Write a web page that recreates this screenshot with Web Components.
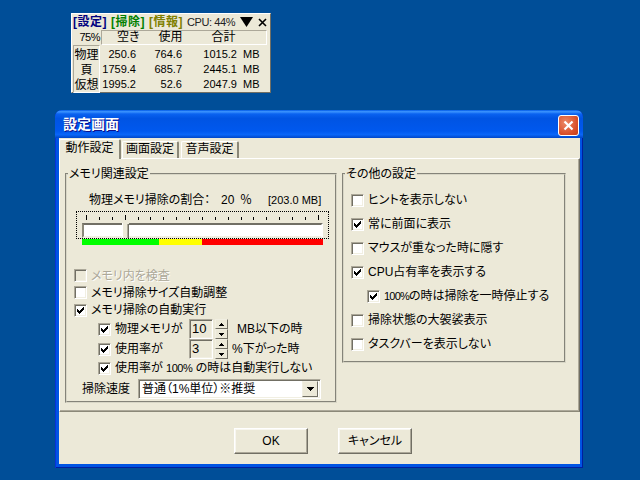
<!DOCTYPE html>
<html lang="ja">
<head>
<meta charset="utf-8">
<title>設定画面</title>
<style>
html, body { margin: 0; padding: 0; background: #004e98; }
</style>
</head>
<body>
<x-desktop>
  <x-monitor></x-monitor>
  <x-dialog>
    <span slot="title">設定画面</span>
    <x-tabs></x-tabs>
    <x-page>
      <x-group style="width:272px;height:236px" class="mem">
        <span slot="legend">メモリ関連設定</span>
        <x-mem-settings></x-mem-settings>
      </x-group>
      <x-group style="width:224px;height:196px">
        <span slot="legend">その他の設定</span>
        <x-other-settings></x-other-settings>
      </x-group>
    </x-page>
    <x-footer>
      <x-button>OK</x-button>
      <x-button>キャンセル</x-button>
    </x-footer>
  </x-dialog>
</x-desktop>

<script>
function define(name, html) {
  const template = document.createElement("template");
  template.innerHTML = html;
  customElements.define(name, class extends HTMLElement {
    constructor() {
      super();
      this.attachShadow({ mode: "open" });
      this.shadowRoot.appendChild(template.content.cloneNode(true));
    }
  });
}

const checkMark = `<svg width="7" height="7" viewBox="0 0 7 7" shape-rendering="crispEdges"><path fill="#000" d="M0 2h1v1h1v1h1v-1h1v-1h1v-1h1v-1h1v3h-1v1h-1v1h-1v1h-1v1h-1v-1h-1v-1h-1v-1h-1z"/></svg>`;

define("x-desktop", `
<style>
:host {
  display: block;
  position: relative;
  width: 640px;
  height: 480px;
  overflow: hidden;
  background: #004e98;
  color: #000;
  font: 12px/14px "Liberation Sans", "Noto Sans CJK JP", sans-serif;
  font-feature-settings: "palt";
}
</style>
<slot></slot>`);

define("x-monitor", `
<style>
:host {
  display: block;
  position: absolute;
  left: 71px;
  top: 13px;
  width: 200px;
  height: 80px;
  box-sizing: border-box;
  background: #ece9d8;
  border: 1px solid;
  border-color: #fff #716f64 #716f64 #fff;
}
.top { display: flex; align-items: center; height: 16px; padding-left: 1px; }
.top b { font-weight: bold; width: 38px; letter-spacing: .5px; white-space: nowrap; }
.cpu { font-size: 11px; letter-spacing: -.4px; width: 53px; color: #222; white-space: nowrap; }
.set { color: #000080; }
.del { color: #008000; }
.inf { color: #808000; }
.main {
  display: grid;
  grid-template-columns: 27px 167px;
  grid-template-rows: 15px 48px;
  margin-left: 1px;
}
.pct { font-size: 11px; letter-spacing: -.5px; text-align: right; line-height: 15px; }
.head, .side {
  box-sizing: border-box;
  border: 1px solid;
  border-color: #aca899 #fff #fff #aca899;
}
.head {
  margin-left: 1px;
  display: flex;
  gap: 19px;
  padding-left: 15px;
  line-height: 13px;
  white-space: nowrap;
}
.head span:last-child { margin-left: 10px; }
.side { display: grid; grid-auto-rows: 15px; text-align: center; align-items: center; padding-top: 1px; }
.data {
  display: grid;
  grid-template-columns: 36px 46px 55px 30px;
  grid-auto-rows: 15px;
  padding-top: 1px;
  align-items: center;
  font-size: 11px;
  text-align: right;
}
.data span:nth-child(4n) { text-align: left; padding-left: 6px; }
</style>
<div class="top">
  <b class="set">[設定]</b><b class="del">[掃除]</b><b class="inf">[情報]</b>
  <span class="cpu">CPU: 44%</span>
  <svg width="13" height="10" viewBox="0 0 13 10"><path d="M0 0h13L6.5 10z" fill="#000"/></svg>
  <svg width="9" height="9" viewBox="0 0 9 9" style="margin-left:5px"><path d="M1 1l7 7M8 1L1 8" stroke="#000" stroke-width="1.6" fill="none"/></svg>
</div>
<div class="main">
  <div class="pct">75%</div>
  <div class="head"><span>空き</span><span>使用</span><span>合計</span></div>
  <div class="side"><span>物理</span><span>頁</span><span>仮想</span></div>
  <div class="data">
    <span>250.6</span><span>764.6</span><span>1015.2</span><span>MB</span>
    <span>1759.4</span><span>685.7</span><span>2445.1</span><span>MB</span>
    <span>1995.2</span><span>52.6</span><span>2047.9</span><span>MB</span>
  </div>
</div>`);

define("x-dialog", `
<style>
:host {
  display: block;
  position: absolute;
  left: 55px;
  top: 110px;
  width: 528px;
  height: 358px;
}
.frame {
  display: flex;
  flex-direction: column;
  height: 100%;
  box-sizing: border-box;
  border-radius: 7px 7px 0 0;
  overflow: hidden;
  background: #0054e3;
  box-shadow: inset 1px 0 #0831d9, inset -1px 0 #001ea0, inset 0 -1px #001ea0;
}
.title {
  display: flex;
  align-items: center;
  justify-content: space-between;
  height: 28px;
  flex: none;
  padding: 0 4px 0 8px;
  background: linear-gradient(180deg, #0058e6 0, #3d95ff 6%, #0a62f0 14%, #0054e3 30%, #0058ee 75%, #0a66f8 88%, #0046c8 100%);
  color: #fff;
  font-size: 14px;
  font-weight: bold;
  text-shadow: 1px 1px #0f1089;
}
.close {
  width: 21px;
  height: 21px;
  box-sizing: border-box;
  margin-top: 2px;
  border: 1px solid #fff;
  border-radius: 3px;
  background: radial-gradient(circle at 35% 35%, #ec8a68, #d9502b 65%, #c33d17);
  display: flex;
  align-items: center;
  justify-content: center;
}
.body {
  flex: 1;
  margin: 0 3px 4px 4px;
  background: #ece9d8;
  display: flex;
  flex-direction: column;
}
</style>
<div class="frame">
  <div class="title">
    <slot name="title"></slot>
    <div class="close"><svg width="11" height="11" viewBox="0 0 11 11"><path d="M1.5 1.5l8 8M9.5 1.5l-8 8" stroke="#fff" stroke-width="2.2" fill="none"/></svg></div>
  </div>
  <div class="body"><slot></slot></div>
</div>`);

define("x-tabs", `
<style>
:host {
  display: flex;
  align-items: flex-end;
  flex: none;
  height: 20px;
  margin-top: 1px;
  margin-bottom: -1px;
  position: relative;
  z-index: 1;
}
div {
  box-sizing: border-box;
  height: 17px;
  margin-bottom: 1px;
  background: #ece9d8;
  border: 1px solid #fff;
  border-bottom: 0;
  border-right: 2px solid #8b8878;
  border-radius: 2px 2px 0 0;
  text-align: center;
  line-height: 15px;
}
.on { width: 62px; height: 20px; margin-bottom: 0; line-height: 17px; margin-right: 1px; }
.b { width: 57px; margin-right: 2px; }
.c { width: 58px; }
</style>
<div class="on">動作設定</div><div class="b">画面設定</div><div class="c">音声設定</div>`);

define("x-page", `
<style>
:host {
  display: flex;
  align-items: flex-start;
  gap: 5px;
  flex: none;
  box-sizing: border-box;
  height: 254px;
  width: 521px;
  padding: 8px 0 0 5px;
  border: 1px solid;
  border-color: #fff #716f64 #8b8878 #fff;
  box-shadow: inset -1px -1px #aca899;
}
</style>
<slot></slot>`);

define("x-group", `
<style>
:host { display: block; box-sizing: border-box; }
fieldset {
  box-sizing: border-box;
  height: 100%;
  margin: 0;
  padding: 0;
  border: 2px groove #d8d6c6;
  min-width: 0;
}
legend { padding: 0 1px; margin-left: 1px; line-height: 14px; }
</style>
<fieldset><legend><slot name="legend"></slot></legend><slot></slot></fieldset>`);

define("x-check", `
<style>
:host {
  display: flex;
  align-items: center;
  gap: 4px;
  white-space: nowrap;
}
.box {
  flex: none;
  width: 13px;
  height: 13px;
  box-sizing: border-box;
  border: 1px solid;
  border-color: #aca899 #fff #fff #aca899;
  box-shadow: inset 1px 1px #716f64, inset -1px -1px #f1efe2;
  background: #fff;
  display: flex;
  align-items: center;
  justify-content: center;
}
svg { display: none; }
:host([checked]) svg { display: block; }
:host([disabled]) .box { background: #ece9d8; }
:host([disabled]) { color: #aca899; text-shadow: 1px 1px #fff; }
</style>
<span class="box">${checkMark}</span><span><slot></slot></span>`);

define("x-spin", `
<style>
:host { display: flex; width: 39px; height: 20px; }
.edit {
  box-sizing: border-box;
  width: 24px;
  border: 1px solid;
  border-color: #aca899 #fff #fff #aca899;
  box-shadow: inset 1px 1px #716f64, inset -1px -1px #f1efe2;
  padding: 2px 0 0 2px;
  font-size: 13px;
}
.ud { display: grid; grid-template-rows: 1fr 1fr; width: 13px; margin-left: 2px; }
.ud span {
  box-sizing: border-box;
  border: 1px solid;
  border-color: #f1efe2 #716f64 #716f64 #f1efe2;
  display: flex;
  align-items: center;
  justify-content: center;
}
</style>
<div class="edit"><slot></slot></div>
<div class="ud">
  <span><svg width="5" height="3" viewBox="0 0 5 3" shape-rendering="crispEdges"><path d="M2 0h1v1h1v1h1v1H0V2h1V1h1z"/></svg></span>
  <span><svg width="5" height="3" viewBox="0 0 5 3" shape-rendering="crispEdges"><path d="M0 0h5v1H4v1H3v1H2V2H1V1H0z"/></svg></span>
</div>`);

define("x-slider", `
<style>
:host {
  display: block;
  box-sizing: border-box;
  width: 253px;
  height: 28px;
  border: 1px dotted #000;
  padding: 3px 0 0 5px;
}
.ticks {
  display: flex;
  justify-content: space-between;
  align-items: flex-end;
  width: 233px;
  height: 5px;
  margin-left: 4px;
}
.ticks i { width: 1px; height: 3px; background: #000; }
.ticks i.big { height: 5px; }
.track {
  position: relative;
  box-sizing: border-box;
  width: 241px;
  height: 15px;
  margin-top: 3px;
  background: #fff;
  border: 2px solid;
  border-color: #716f64 #fff #f1efe2 #8b8878;
}
svg { position: absolute; left: 38px; top: -5px; }
</style>
<div class="ticks"><i class="big"></i><i></i><i></i><i class="big"></i><i></i><i></i><i></i><i></i><i></i><i></i><i></i><i></i><i></i><i></i><i></i><i></i><i></i><i></i><i class="big"></i></div>
<div class="track">
  <svg width="7" height="18" viewBox="0 0 7 18" shape-rendering="crispEdges"><path d="M0 3l3-3 4 4v14H0z" fill="#ece9d8"/><path d="M6 4h1v14H6z" fill="#716f64"/><path d="M5 4h1v14H5z" fill="#aca899"/><path d="M0 3h1v15H0z" fill="#fff"/></svg>
</div>`);

define("x-combo", `
<style>
:host {
  display: flex;
  box-sizing: border-box;
  width: 183px;
  height: 20px;
  background: #fff;
  border: 1px solid;
  border-color: #aca899 #fff #fff #aca899;
  box-shadow: inset 1px 1px #716f64, inset -1px -1px #f1efe2;
  align-items: center;
  justify-content: space-between;
  padding: 0 2px 0 3px;
}
.btn {
  width: 16px;
  height: 16px;
  box-sizing: border-box;
  background: #ece9d8;
  border: 1px solid;
  border-color: #f1efe2 #716f64 #716f64 #f1efe2;
  display: flex;
  align-items: center;
  justify-content: center;
}
</style>
<span><slot></slot></span>
<span class="btn"><svg width="7" height="4" viewBox="0 0 7 4" shape-rendering="crispEdges"><path d="M0 0h7v1H6v1H5v1H4v1H3V3H2V2H1V1H0z"/></svg></span>`);

define("x-mem-settings", `
<style>
:host {
  display: flex;
  flex-direction: column;
  padding: 12px 0 0 7px;
}
.rate { display: flex; height: 14px; margin-left: 15px; white-space: nowrap; }
.rate .a { width: 132px; }
.rate .b { width: 19px; }
.rate .c { width: 28px; }
.rate .d { font-size: 11px; }
x-slider { margin: 4px 0 0 2px; }
.bar { display: flex; width: 241px; height: 6px; margin: 0 0 0 8px; }
.bar i:nth-child(1) { width: 77px; background: #00ff00; }
.bar i:nth-child(2) { width: 43px; background: #ffff00; }
.bar i:nth-child(3) { width: 121px; background: #ff0000; }
.row { height: 17px; }
.first { margin-top: 22px; }
.last { height: 18px; }
.spinrow { display: flex; align-items: center; height: 20px; }
.spinrow x-check { width: 91px; margin-left: 24px; box-sizing: border-box; }
.mb { margin-left: 9px; }
.pc { margin-left: 4px; }
.sub { margin-left: 24px; height: 18px; }
.num { font-size: 11px; letter-spacing: -.5px; }
.speed { display: flex; align-items: center; margin: 2px 0 0 8px; gap: 8px; }
.speed span { width: 48px; }
</style>
<div class="rate"><span class="a">物理メモリ掃除の割合：</span><span class="b">20</span><span class="c">％</span><span class="d">[203.0 MB]</span></div>
<x-slider></x-slider>
<div class="bar"><i></i><i></i><i></i></div>
<x-check class="row first" disabled>メモリ内を検査</x-check>
<x-check class="row">メモリ掃除サイズ自動調整</x-check>
<x-check class="row last" checked>メモリ掃除の自動実行</x-check>
<div class="spinrow"><x-check checked>物理メモリが</x-check><x-spin>10</x-spin><span class="mb">MB以下の時</span></div>
<div class="spinrow"><x-check checked>使用率が</x-check><x-spin>3</x-spin><span class="pc">%下がった時</span></div>
<x-check class="sub" checked>使用率が <span class="num">100%</span> の時は自動実行しない</x-check>
<div class="speed"><span>掃除速度</span><x-combo>普通（1%単位）※推奨</x-combo></div>`);

define("x-other-settings", `
<style>
:host {
  display: grid;
  grid-auto-rows: 24px;
  padding: 7px 0 0 7px;
}
.sub { margin-left: 16px; }
.num { font-size: 11px; letter-spacing: -.8px; }
</style>
<x-check>ヒントを表示しない</x-check>
<x-check checked>常に前面に表示</x-check>
<x-check>マウスが重なった時に隠す</x-check>
<x-check checked>CPU占有率を表示する</x-check>
<x-check class="sub" checked><span class="num">100%</span>の時は掃除を一時停止する</x-check>
<x-check>掃除状態の大袈裟表示</x-check>
<x-check>タスクバーを表示しない</x-check>`);

define("x-footer", `
<style>
:host {
  display: flex;
  gap: 30px;
  flex: none;
  padding: 16px 0 0 175px;
}
</style>
<slot></slot>`);

define("x-button", `
<style>
:host {
  display: flex;
  align-items: center;
  justify-content: center;
  box-sizing: border-box;
  width: 74px;
  height: 26px;
  background: #ece9d8;
  border: 1px solid;
  border-color: #fff #716f64 #716f64 #fff;
  box-shadow: inset -1px -1px #aca899, inset 1px 1px #f8f7f0;
}
</style>
<slot></slot>`);
</script>
</body>
</html>
